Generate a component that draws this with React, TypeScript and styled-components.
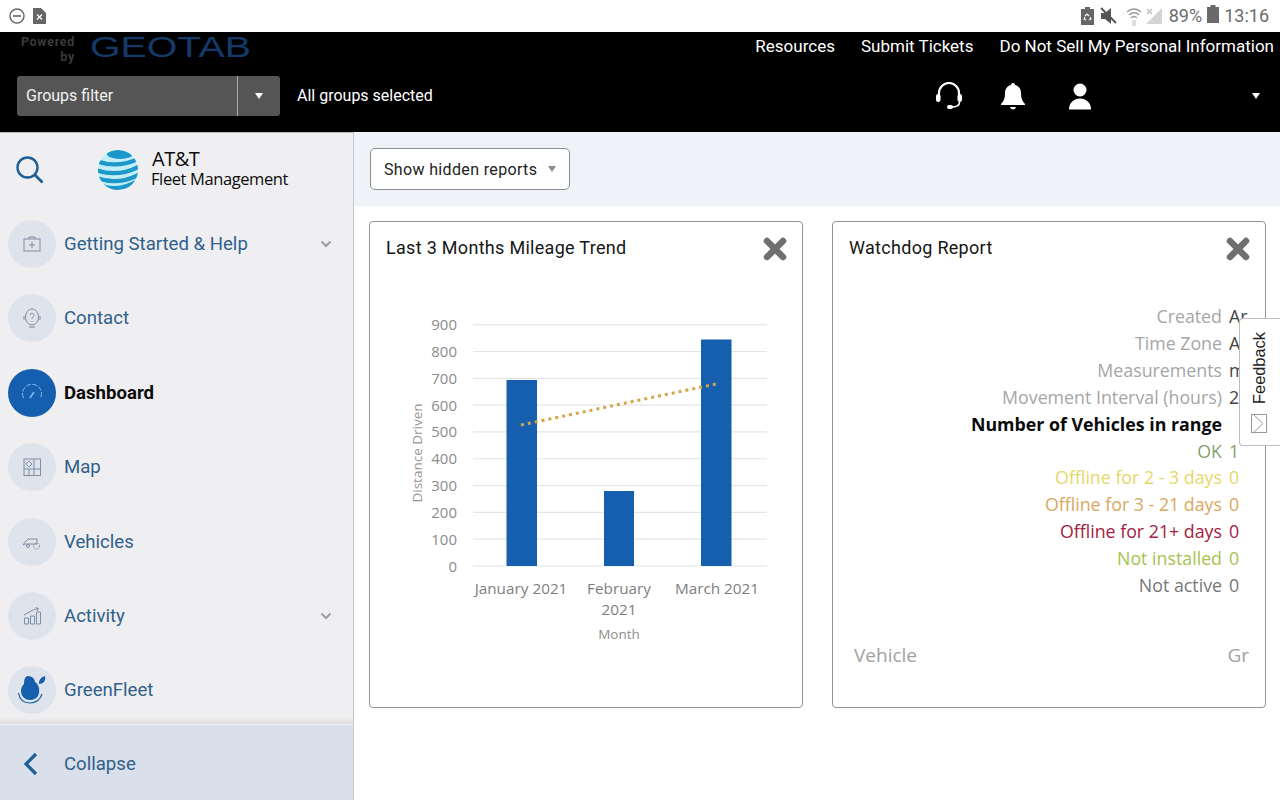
import React from 'react'
import styled, { createGlobalStyle } from 'styled-components'

const GlobalStyle = createGlobalStyle`
  html, body {
    margin: 0;
    padding: 0;
    background: #fff;
    font-family: Roboto, "Liberation Sans", sans-serif;
  }
  * { box-sizing: border-box; }
`

const Page = styled.div`
  width: 1280px;
  height: 800px;
  display: flex;
  flex-direction: column;
  overflow: hidden;
  position: relative;
`

/* android status bar */
const StatusBar = styled.div`
  height: 32px;
  flex: none;
  background: #fff;
  display: flex;
  align-items: center;
  justify-content: space-between;
  padding: 0 11px 0 9px;
  color: #6c6c6c;
`
const StatusGroup = styled.div`
  display: flex;
  align-items: center;
  gap: 8px;
`
const StatusRight = styled(StatusGroup)`
  gap: 0;
`
const StatusIcon = styled.span<{ $left: number; $lift?: number }>`
  display: flex;
  margin-left: ${(p) => p.$left}px;
  margin-bottom: ${(p) => p.$lift || 0}px;
`
const StatusText = styled.span<{ $left: number }>`
  font-size: 18px;
  line-height: 32px;
  margin-left: ${(p) => p.$left}px;
`

/* black header */
const Header = styled.header`
  height: 100px;
  flex: none;
  background: #000;
  color: #fff;
  display: flex;
  flex-direction: column;
`
const HeaderTop = styled.div`
  height: 32px;
  display: flex;
  align-items: flex-start;
  justify-content: space-between;
  padding-left: 18px;
  padding-right: 6px;
`
const Brand = styled.div`
  display: flex;
  align-items: flex-start;
  gap: 15px;
  height: 30px;
`
const PoweredBy = styled.div`
  width: 57px;
  padding-top: 3px;
  font-size: 12.5px;
  line-height: 14.5px;
  letter-spacing: 0.7px;
  font-weight: 700;
  color: #3a3a3a;
  text-align: right;
`
const Geotab = styled.div`
  font-family: "Liberation Sans", sans-serif;
  font-size: 30px;
  line-height: 30px;
  color: #143a6a;
  transform: scaleX(1.31);
  transform-origin: left center;
`
const TopLinks = styled.nav`
  display: flex;
  gap: 26px;
  padding-top: 4px;
  font-size: 17px;
  line-height: 20px;
`
const HeaderBottom = styled.div`
  flex: 1;
  display: flex;
  align-items: flex-start;
  padding: 12px 17px 0;
`
const GroupsFilter = styled.div`
  width: 263px;
  height: 40px;
  background: #555;
  border-radius: 3px;
  display: flex;
  align-items: center;
`
const GroupsLabel = styled.span`
  flex: 1;
  padding: 0 0 2px 9px;
  font-size: 16px;
  color: #f2f2f2;
`
const GroupsArrow = styled.span`
  width: 43px;
  height: 100%;
  border-left: 1px solid #aaa;
  display: flex;
  align-items: center;
  justify-content: center;
`
const Caret = styled.span<{ $color?: string }>`
  display: block;
  width: 0;
  height: 0;
  border-left: 4.5px solid transparent;
  border-right: 4.5px solid transparent;
  border-top: 6px solid ${(p) => p.$color || '#fff'};
`
const GroupsText = styled.span`
  margin-left: 17px;
  line-height: 40px;
  font-size: 16px;
`
const HeaderIcons = styled.div`
  margin-left: auto;
  display: flex;
  align-items: center;
  height: 40px;
  padding-right: 3px;
`
const HeaderIcon = styled.span<{ $left: number }>`
  display: flex;
  margin-left: ${(p) => p.$left}px;
`

/* sidebar + content */
const Body = styled.div`
  flex: 1;
  display: flex;
  min-height: 0;
`
const Sidebar = styled.aside`
  width: 354px;
  flex: none;
  display: flex;
  flex-direction: column;
  background: #efeff1;
  border-right: 1px solid #c4c6ca;
  border-top: 1px solid #b8babd;
`
const LogoRow = styled.div`
  height: 73.8px;
  flex: none;
  display: flex;
  align-items: center;
  padding-left: 15px;
`
const GlobeSlot = styled.span`
  display: flex;
  margin-left: 53px;
`
const LogoText = styled.div`
  margin-left: 13px;
  color: #0c0c0c;
  font-family: "Open Sans", sans-serif;
  padding-bottom: 1px;
`
const LogoTop = styled.div`
  font-size: 20px;
  line-height: 20px;
  letter-spacing: -0.5px;
  margin-left: 1px;
`
const LogoBottom = styled.div`
  font-size: 16.5px;
  line-height: 20px;
  letter-spacing: -0.4px;
`
const Nav = styled.nav`
  flex: 1;
  min-height: 0;
  overflow: hidden;
`
const NavItem = styled.div`
  height: 74.4px;
  display: flex;
  align-items: center;
  padding: 0 21px 0 8px;
`
const Bubble = styled.span<{ $active?: boolean }>`
  width: 48px;
  height: 48px;
  flex: none;
  border-radius: 50%;
  display: flex;
  align-items: center;
  justify-content: center;
  background: ${(p) => (p.$active ? '#155fae' : '#dfe3ec')};
  color: ${(p) => (p.$active ? '#7fc0f2' : '#7d8fa3')};
`
const NavLabel = styled.span<{ $active?: boolean }>`
  flex: 1;
  margin-left: 8px;
  font-size: 18.6px;
  font-weight: ${(p) => (p.$active ? 700 : 400)};
  color: ${(p) => (p.$active ? '#0a0a0a' : '#2f5f8c')};
`
const Footer = styled.div`
  height: 82px;
  flex: none;
  display: flex;
  flex-direction: column;
`
const FooterShade = styled.div`
  height: 7px;
  flex: none;
  background: linear-gradient(#efefef, #dcdcdc);
  border-bottom: 1px solid #f1f3f7;
`
const Collapse = styled.div`
  flex: 1;
  background: #d9dfeb;
  display: flex;
  align-items: center;
  padding: 3px 0 0 22px;
`
const CollapseLabel = styled.span`
  margin-left: 22px;
  font-size: 18.6px;
  color: #2f5f8c;
`
const Content = styled.main`
  flex: 1;
  min-width: 0;
  display: flex;
  flex-direction: column;
`
const Toolbar = styled.div`
  height: 74px;
  flex: none;
  background: #eff3f8;
  padding: 16px 16px;
`
const HiddenSelect = styled.div`
  width: 200px;
  height: 42px;
  background: #fff;
  border: 1px solid #8a8d91;
  border-radius: 5px;
  display: flex;
  align-items: center;
  justify-content: space-between;
  padding: 0 13px;
  font-size: 16px;
  letter-spacing: 0.35px;
  color: #222;
`
const Cards = styled.div`
  display: flex;
  gap: 29px;
  padding: 15px 0 0 15px;
`
const Card = styled.section`
  width: 434px;
  height: 487px;
  background: #fff;
  border: 1px solid #8f9296;
  border-radius: 4px;
  display: flex;
  flex-direction: column;
  overflow: hidden;
`
const CardHead = styled.div`
  display: flex;
  align-items: flex-start;
  justify-content: space-between;
  padding: 14px 16px 0;
  height: 64px;
`
const CardTitle = styled.h2`
  margin: 0;
  font-size: 18px;
  line-height: 24px;
  font-weight: 400;
  letter-spacing: 0.3px;
  color: #161616;
`
const Close = styled.span`
  display: flex;
  margin: 1px -1px 0 0;
`
const Chart = styled.svg`
  display: block;
  font-family: "Open Sans", sans-serif;
`
const Report = styled.div`
  padding: 17px 16px 0 0;
  font-family: "Open Sans", sans-serif;
  font-size: 17.8px;
  line-height: 26.9px;
`
const ReportRow = styled.div<{ $color: string; $bold?: boolean }>`
  display: grid;
  grid-template-columns: 389px 1fr;
  column-gap: 7px;
  color: ${(p) => p.$color};
  font-weight: ${(p) => (p.$bold ? 700 : 400)};
  white-space: nowrap;
`
const ReportLabel = styled.span`
  text-align: right;
`
const ReportValue = styled.span<{ $dark?: boolean }>`
  overflow: hidden;
  color: ${(p) => (p.$dark ? '#444' : 'inherit')};
`
const ReportFoot = styled.div`
  display: flex;
  justify-content: space-between;
  padding: 0 16px 0 21px;
  margin-top: 43px;
  font-family: "Open Sans", sans-serif;
  font-size: 19px;
  color: #a2a2a2;
`
const Feedback = styled.div`
  position: absolute;
  top: 318px;
  right: 0;
  width: 41px;
  height: 128px;
  background: #fff;
  border: 1px solid #bcbcbc;
  border-right: none;
  border-radius: 4px 0 0 4px;
  display: flex;
  flex-direction: column;
  align-items: center;
  padding: 13px 2px 0 0;
  gap: 10px;
`
const FeedbackText = styled.span`
  writing-mode: vertical-rl;
  transform: rotate(180deg);
  font-family: "Liberation Sans", sans-serif;
  font-size: 16.4px;
  line-height: 20px;
  color: #222;
`

const Svg: React.FC<{ children: React.ReactNode }> = ({ children }) => (
  <svg width="24" height="24" viewBox="0 0 24 24" fill="none" stroke="currentColor" strokeWidth="1">
    {children}
  </svg>
)

const navItems = [
  {
    label: 'Getting Started & Help',
    more: true,
    icon: (
      <Svg>
        <rect x="4" y="7" width="16" height="12" />
        <path d="M9 7V5h6v2M12 10v6M9 13h6" />
      </Svg>
    )
  },
  {
    label: 'Contact',
    icon: (
      <Svg>
        <ellipse cx="12" cy="11" rx="6.500" ry="8" />
        <path d="M4 10v4M20 10v4M9 21h6" />
        <path d="M10 9a2 2 0 1 1 3 2c-1 .6-1 1-1 2M12 15v1" />
      </Svg>
    )
  },
  {
    label: 'Dashboard',
    active: true,
    icon: (
      <Svg>
        <path d="M3.500 17a9.500 9.500 0 0 1 17 -8.500a9.500 9.500 0 0 1 0 8.500" strokeDasharray="5 1.500" />
        <path d="M10 17l4-6" strokeWidth="1.500" />
      </Svg>
    )
  },
  {
    label: 'Map',
    icon: (
      <Svg>
        <rect x="4" y="4" width="16.500" height="16.500" />
        <path d="M4 14h16.500M14 4v16.500M9 20v-6" />
        <path d="M9 6l3 3-3 3-3-3z" />
      </Svg>
    )
  },
  {
    label: 'Vehicles',
    icon: (
      <Svg>
        <path d="M8 9h9v5H5l-2 1 3-4z" />
        <circle cx="16.500" cy="16" r="3" strokeDasharray="1.500 1" />
        <circle cx="8" cy="16" r="1.500" />
      </Svg>
    )
  },
  {
    label: 'Activity',
    more: true,
    icon: (
      <Svg>
        <path d="M4.500 20v-6h4v6zM10.500 20v-8h4v8zM16.500 20V8h4v12z" />
        <path d="M4 11l9-5 5-1.500M15.500 3.500l3 1-1.500 2.500" />
      </Svg>
    )
  },
  {
    label: 'GreenFleet',
    icon: (
      <svg width="30" height="32" viewBox="0 0 30 32" fill="none">
        <path
          d="M11 2c4 0 7 3 7 6 3 2 5 6 4 11-1 5-5 7-9 7s-9-3-9-9c0-3 1-5 3-7 0-4 1-8 4-8z"
          fill="#155fae"
        />
        <path d="M22 9c0-4 3-6 6-7 1 4-1 8-6 8z" fill="#155fae" />
        <path d="M1.500 19c1 6 5 10 11.500 10s10-3 12-9" stroke="#155fae" strokeWidth="1.200" />
      </svg>
    )
  }
]

const grid = [0, 100, 200, 300, 400, 500, 600, 700, 800, 900]
const yAt = (v: number) => 345 - v * 0.2681

const MileageChart = () => (
  <Chart width="432" height="420" viewBox="0 65 432 420">
    {grid.map((v) => (
      <React.Fragment key={v}>
        <line x1="103" x2="397" y1={yAt(v)} y2={yAt(v)} stroke="#e3e5e8" strokeWidth="1.200" />
        <text x="87" y={yAt(v) + 5.500} textAnchor="end" fontSize="15" fill="#8c8c8c">
          {v}
        </text>
      </React.Fragment>
    ))}
    <rect x="136.500" y="159" width="30.500" height="186" fill="#155fae" />
    <rect x="234" y="270" width="30" height="75" fill="#155fae" />
    <rect x="331" y="118.500" width="30.500" height="226.500" fill="#155fae" />
    <line
      x1="151"
      y1="204"
      x2="346"
      y2="163"
      stroke="#d2a548"
      strokeWidth="3"
      strokeDasharray="3 4"
    />
    <text
      transform="translate(52 232) rotate(-90)"
      textAnchor="middle"
      fontSize="13.500"
      fill="#969696"
    >
      Distance Driven
    </text>
    <g fontSize="15.300" fill="#7e7e7e" textAnchor="middle">
      <text x="151" y="373">January 2021</text>
      <text x="249" y="373">February</text>
      <text x="249" y="394">2021</text>
      <text x="347" y="373">March 2021</text>
    </g>
    <text x="249" y="418" textAnchor="middle" fontSize="13.500" fill="#8e8e8e">
      Month
    </text>
  </Chart>
)

const reportRows = [
  { label: 'Created', value: 'Ar', color: '#a6a6a6', dark: true },
  { label: 'Time Zone', value: 'A', color: '#a6a6a6', dark: true },
  { label: 'Measurements', value: 'm', color: '#a6a6a6', dark: true },
  { label: 'Movement Interval (hours)', value: '2', color: '#a6a6a6', dark: true },
  { label: 'Number of Vehicles in range', value: '', color: '#0a0a0a', bold: true },
  { label: 'OK', value: '1', color: '#88a070' },
  { label: 'Offline for 2 - 3 days', value: '0', color: '#e6d768' },
  { label: 'Offline for 3 - 21 days', value: '0', color: '#d9a860' },
  { label: 'Offline for 21+ days', value: '0', color: '#a32040' },
  { label: 'Not installed', value: '0', color: '#a6c24e' },
  { label: 'Not active', value: '0', color: '#777' }
]

const CloseIcon = () => (
  <svg width="24" height="24" viewBox="0 0 24 24">
    <path d="M4 4l16 16M20 4L4 20" stroke="#6f6f6f" strokeWidth="6.500" strokeLinecap="round" />
  </svg>
)

const Chevron = () => (
  <svg width="12" height="8" viewBox="0 0 12 8" fill="none">
    <path d="M1.500 1.500L6 6l4.500-4.500" stroke="#9a9ea4" strokeWidth="2" />
  </svg>
)

const Globe = () => (
  <svg width="40" height="42" viewBox="0 0 40 42" fill="none">
    <defs>
      <clipPath id="globe">
        <circle cx="20" cy="21" r="20" />
      </clipPath>
    </defs>
    <g clipPath="url(#globe)">
      <rect width="40" height="42" fill="#c4eef7" />
      <ellipse cx="22" cy="5" rx="13" ry="5" fill="#1b97c9" />
      <g stroke="#1b97c9" strokeWidth="4.200">
        <path d="M-2 12Q20 20 42 9" />
        <path d="M-2 21Q20 29 42 17" />
        <path d="M-1 29Q20 37 42 25" />
        <path d="M4 37Q20 43 40 32" />
      </g>
    </g>
  </svg>
)

const App: React.FC = () => (
  <Page>
    <GlobalStyle />
    <StatusBar>
      <StatusGroup>
        <svg width="16" height="16" viewBox="0 0 16 16" fill="none">
          <circle cx="8" cy="8" r="7" stroke="#666" strokeWidth="1.400" />
          <path d="M4 8h8" stroke="#666" strokeWidth="1.600" />
        </svg>
        <svg width="13" height="16" viewBox="0 0 13 16">
          <path d="M0 0h8l5 5v11H0z" fill="#666" />
          <path d="M4 6.500l5 5M9 6.500l-5 5" stroke="#fff" strokeWidth="1.300" />
        </svg>
      </StatusGroup>
      <StatusRight>
        <StatusIcon $left={0}>
          <svg width="13" height="18" viewBox="0 0 13 18">
            <path d="M4 0h5v2h4v16H0V2h4z" fill="#666" />
            <path d="M4 9l2-2 2 2M9 10l1 2-2 1M5 13l-2-1 1-2" stroke="#fff" strokeWidth="1.100" fill="none" />
          </svg>
        </StatusIcon>
        <StatusIcon $left={6}>
          <svg width="17" height="18" viewBox="0 0 17 18">
            <path d="M1 6h4l6-5v16l-6-5H1z" fill="#555" />
            <path d="M1 1l15 15" stroke="#555" strokeWidth="2" />
          </svg>
        </StatusIcon>
        <StatusIcon $left={9}>
          <svg width="16" height="20" viewBox="0 0 16 20" fill="none">
            <path d="M1 6c4-4 10-4 14 0M3 9c3-3 7-3 10 0M5 12c2-2 4-2 6 0" stroke="#999" strokeWidth="1.300" />
            <path d="M6 14h4v6H6z" fill="#ddd" />
          </svg>
        </StatusIcon>
        <StatusIcon $left={4}>
          <svg width="16" height="16" viewBox="0 0 16 16">
            <path d="M16 0v16H0z" fill="#d4d4d4" />
            <path d="M1 1l5 5M6 1L1 6" stroke="#bbb" strokeWidth="1.200" />
          </svg>
        </StatusIcon>
        <StatusText $left={7}>89%</StatusText>
        <StatusIcon $left={5} $lift={4}>
          <svg width="12" height="18" viewBox="0 0 12 18">
            <path d="M3.500 0h5v2H12v16H0V2h3.500z" fill="#6a6a6a" />
          </svg>
        </StatusIcon>
        <StatusText $left={5}>13:16</StatusText>
      </StatusRight>
    </StatusBar>

    <Header>
      <HeaderTop>
        <Brand>
          <PoweredBy>
            Powered
            <br />
            by
          </PoweredBy>
          <Geotab>GEOTAB</Geotab>
        </Brand>
        <TopLinks>
          <span>Resources</span>
          <span>Submit Tickets</span>
          <span>Do Not Sell My Personal Information</span>
        </TopLinks>
      </HeaderTop>
      <HeaderBottom>
        <GroupsFilter>
          <GroupsLabel>Groups filter</GroupsLabel>
          <GroupsArrow>
            <Caret />
          </GroupsArrow>
        </GroupsFilter>
        <GroupsText>All groups selected</GroupsText>
        <HeaderIcons>
          <HeaderIcon $left={0}>
            <svg width="28" height="28" viewBox="0 0 28 28" fill="none">
              <path d="M4 15V11a10 10 0 0 1 20 0v4" stroke="#fff" strokeWidth="2.200" />
              <rect x="1" y="12" width="4.500" height="8" rx="2.200" fill="#fff" />
              <rect x="22.500" y="12" width="4.500" height="8" rx="2.200" fill="#fff" />
              <path d="M24.500 20c0 3-3 5-8 5" stroke="#fff" strokeWidth="1.600" />
              <rect x="12" y="23" width="6" height="4" rx="2" fill="#fff" />
            </svg>
          </HeaderIcon>
          <HeaderIcon $left={37}>
            <svg width="26" height="28" viewBox="0 0 26 28">
              <path
                d="M13 1c1.200 0 2 .8 2 2 4 1 6 4 6 8 0 5 1 8 4 11v1H1v-1c3-3 4-6 4-11 0-4 2-7 6-8 0-1.200.8-2 2-2z"
                fill="#fff"
              />
              <path d="M10 25h6c-.5 1.500-1.500 2.500-3 2.500S10.500 26.500 10 25z" fill="#fff" />
            </svg>
          </HeaderIcon>
          <HeaderIcon $left={42}>
            <svg width="24" height="27" viewBox="0 0 24 27">
              <circle cx="12" cy="7" r="6.500" fill="#fff" />
              <path d="M1 26.500c0-7 5-11 11-11s11 4 11 11z" fill="#fff" />
            </svg>
          </HeaderIcon>
          <HeaderIcon $left={160}>
            <Caret />
          </HeaderIcon>
        </HeaderIcons>
      </HeaderBottom>
    </Header>

    <Body>
      <Sidebar>
        <LogoRow>
          <svg width="30" height="30" viewBox="0 0 30 30" fill="none">
            <circle cx="12.500" cy="12.500" r="10" stroke="#1d5f96" strokeWidth="2.400" />
            <path d="M20 20l7.500 7.500" stroke="#1d5f96" strokeWidth="2.800" />
          </svg>
          <GlobeSlot>
            <Globe />
          </GlobeSlot>
          <LogoText>
            <LogoTop>AT&amp;T</LogoTop>
            <LogoBottom>Fleet Management</LogoBottom>
          </LogoText>
        </LogoRow>
        <Nav>
          {navItems.map((item) => (
            <NavItem key={item.label}>
              <Bubble $active={item.active}>{item.icon}</Bubble>
              <NavLabel $active={item.active}>{item.label}</NavLabel>
              {item.more && <Chevron />}
            </NavItem>
          ))}
        </Nav>
        <Footer>
          <FooterShade />
          <Collapse>
            <svg width="20" height="24" viewBox="0 0 20 24" fill="none">
              <path d="M14 2L4 12l10 10" stroke="#1d5f96" strokeWidth="3.200" />
            </svg>
            <CollapseLabel>Collapse</CollapseLabel>
          </Collapse>
        </Footer>
      </Sidebar>

      <Content>
        <Toolbar>
          <HiddenSelect>
            Show hidden reports
            <Caret $color="#8b8b8b" />
          </HiddenSelect>
        </Toolbar>
        <Cards>
          <Card>
            <CardHead>
              <CardTitle>Last 3 Months Mileage Trend</CardTitle>
              <Close>
                <CloseIcon />
              </Close>
            </CardHead>
            <MileageChart />
          </Card>
          <Card>
            <CardHead>
              <CardTitle>Watchdog Report</CardTitle>
              <Close>
                <CloseIcon />
              </Close>
            </CardHead>
            <Report>
              {reportRows.map((row) => (
                <ReportRow key={row.label} $color={row.color} $bold={row.bold}>
                  <ReportLabel>{row.label}</ReportLabel>
                  <ReportValue $dark={row.dark}>{row.value}</ReportValue>
                </ReportRow>
              ))}
            </Report>
            <ReportFoot>
              <span>Vehicle</span>
              <span>Gr</span>
            </ReportFoot>
          </Card>
        </Cards>
      </Content>
    </Body>

    <Feedback>
      <FeedbackText>Feedback</FeedbackText>
      <svg width="16" height="19" viewBox="0 0 16 19" fill="none">
        <rect x="0.500" y="0.500" width="15" height="18" stroke="#9a9a9a" />
        <path d="M3 1l9 8.500L3 18" stroke="#9a9a9a" />
      </svg>
    </Feedback>
  </Page>
)

export default App
